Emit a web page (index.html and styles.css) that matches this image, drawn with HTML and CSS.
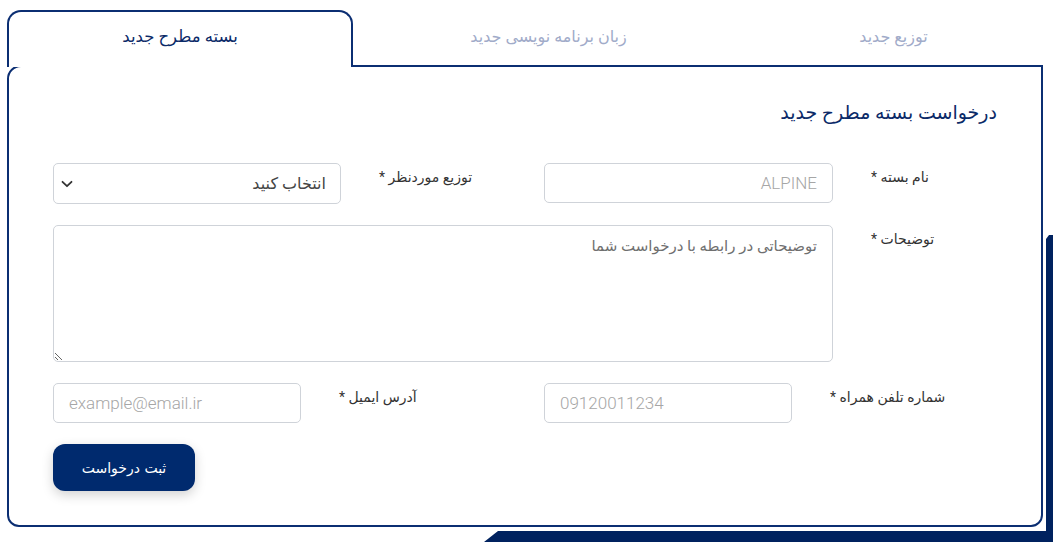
FILE: index.html
```html
<!DOCTYPE html>
<html lang="fa">
<head>
    <meta charset="UTF-8">
    <meta name="viewport" content="width=device-width, initial-scale=1.0">
    <title>درخواست بسته مطرح جدید</title>
    <link rel="stylesheet" href="styles.css">
</head>
<body>
    <div class="page">
        <div class="backdrop"></div>

        <div class="panel" dir="rtl">
            <nav class="tabs">
                <a class="tab">توزیع جدید</a>
                <a class="tab">زبان برنامه نویسی جدید</a>
                <a class="tab active">بسته مطرح جدید</a>
            </nav>

            <div class="card">
                <h2 class="card-title">درخواست بسته مطرح جدید</h2>

                <form class="form">
                    <div class="row row-pair">
                        <label class="label" for="pkgName">نام بسته *</label>
                        <input class="field" id="pkgName" type="text" placeholder="ALPINE">

                        <label class="label" for="distro">توزیع موردنظر *</label>
                        <div class="select-wrap">
                            <select class="field select" id="distro">
                                <option>انتخاب کنید</option>
                            </select>
                            <svg class="chevron" width="12" height="8" viewBox="0 0 12 8">
                                <path d="M1.5 1.8 L6 6.2 L10.5 1.8" fill="none" stroke="#333" stroke-width="1.8" stroke-linecap="round" stroke-linejoin="round"/>
                            </svg>
                        </div>
                    </div>

                    <div class="row row-wide">
                        <label class="label" for="desc">توضیحات *</label>
                        <textarea class="field area" id="desc" placeholder="توضیحاتی در رابطه با درخواست شما"></textarea>
                    </div>

                    <div class="row row-contact">
                        <label class="label" for="phone">شماره تلفن همراه *</label>
                        <input class="field ltr" id="phone" type="text" placeholder="09120011234">

                        <label class="label" for="email">آدرس ایمیل *</label>
                        <input class="field ltr" id="email" type="email" placeholder="example@email.ir">
                    </div>

                    <div class="actions">
                        <button type="button" class="submit">ثبت درخواست</button>
                    </div>
                </form>
            </div>
        </div>
    </div>
</body>
</html>
```

FILE: styles.css
```css
body {
    margin: 0;
    padding: 0;
    background: #fff;
    font-family: Roboto, "DejaVu Sans", sans-serif;
    color: #333;
}

.page {
    position: relative;
    height: 542px;
    overflow: hidden;
    padding: 10px 10px 0 7px;
    box-sizing: border-box;
}

/* navy block peeking out behind the card */
.backdrop {
    position: absolute;
    inset: 0;
    background: #00225f;
    clip-path: polygon(1046px 239px, 1049px 235px, 100% 235px, 100% 100%, 484px 100%, 498px 531px, 1046px 531px);
}

.panel {
    position: relative;
}

.tabs {
    display: grid;
    grid-template-columns: 1fr 1fr 346px;
    height: 55px;
}

.tab {
    display: flex;
    align-items: center;
    justify-content: center;
    padding: 0 0 2px 46px;
    font-size: 16px;
    color: #a1abc9;
    cursor: pointer;
}

.tab.active {
    position: relative;
    z-index: 2;
    margin-bottom: -2px;
    padding: 0 0 7px;
    background: #fff;
    color: #0b2a68;
    border: 2px solid #0b2e72;
    border-bottom: none;
    border-radius: 14px 14px 0 0;
    font-size: 16.5px;
}

.card {
    position: relative;
    z-index: 1;
    background: #fff;
    border: 2px solid #0b2e72;
    border-radius: 14px 0 12px 12px;
    box-shadow: 0 0 0 3px #fff;
    padding: 33px 44px 34px 44px;
}

.card-title {
    margin: 0 0 37px;
    font-size: 19px;
    font-weight: normal;
    line-height: 26px;
    color: #0b2a68;
}

.row {
    display: grid;
    margin-bottom: 21px;
}

.row-pair {
    grid-template-columns: 164px 289px 203px 288px;
}

.row-wide {
    grid-template-columns: 164px 780px;
}

.row-contact {
    grid-template-columns: 205px 248px 243px 248px;
}

.label {
    font-size: 14px;
    line-height: 20px;
    padding-top: 4px;
    text-align: left;
    padding-left: 38px;
    color: #333;
}

.field {
    box-sizing: border-box;
    width: 100%;
    height: 40px;
    border: 1px solid #cfd3d9;
    border-radius: 5px;
    padding: 0 15px;
    font-family: Roboto, "DejaVu Sans", sans-serif;
    font-size: 17px;
    font-weight: 300;
    color: #444;
    background: #fff;
    outline: none;
}

.field::placeholder {
    color: #a6a6a6;
}

.ltr {
    direction: ltr;
    text-align: left;
}

.select-wrap {
    position: relative;
    height: 41px;
}

.select {
    height: 41px;
    appearance: none;
    font-size: 16px;
    font-weight: normal;
    padding-right: 14px;
    color: #444;
}

.chevron {
    position: absolute;
    left: 8px;
    top: 17px;
    pointer-events: none;
}

.area {
    height: 137px;
    padding: 9px 15px;
    font-size: 15px;
    font-weight: normal;
    line-height: 22px;
    resize: vertical;
}

.area::placeholder {
    color: #6f6f6f;
}

.actions {
    display: flex;
    justify-content: flex-end;
}

.submit {
    width: 142px;
    height: 47px;
    border: none;
    border-radius: 12px;
    background: #002a6e;
    color: #fff;
    font-family: "DejaVu Sans", sans-serif;
    font-size: 14px;
    box-shadow: 0 4px 12px rgba(0, 0, 0, 0.18);
    cursor: pointer;
}
```
